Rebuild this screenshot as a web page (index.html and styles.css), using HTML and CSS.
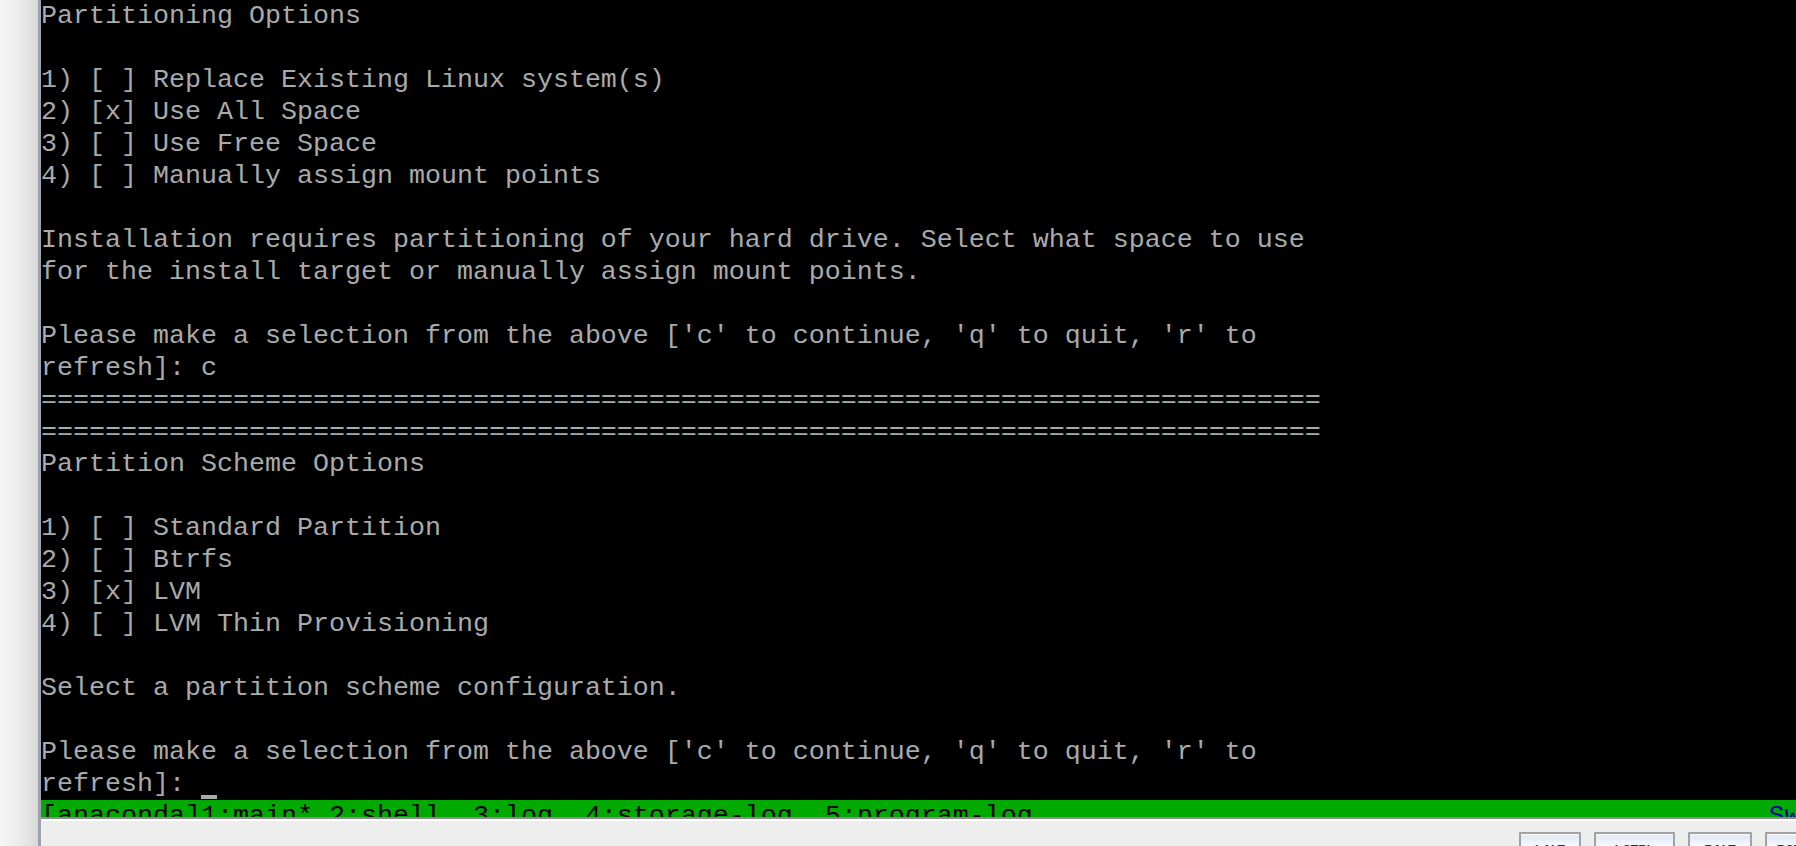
FILE: index.html
```html
<!DOCTYPE html>
<html lang="en">
<head>
<meta charset="utf-8">
<title>Console</title>
<link rel="stylesheet" href="styles.css">
</head>
<body>
<div class="app">
  <aside class="side"></aside>
  <main class="main">
    <div class="term">
<pre class="screen">Partitioning Options

1) [ ] Replace Existing Linux system(s)
2) [x] Use All Space
3) [ ] Use Free Space
4) [ ] Manually assign mount points

Installation requires partitioning of your hard drive. Select what space to use
for the install target or manually assign mount points.

Please make a selection from the above ['c' to continue, 'q' to quit, 'r' to
refresh]: c
================================================================================
================================================================================
Partition Scheme Options

1) [ ] Standard Partition
2) [ ] Btrfs
3) [x] LVM
4) [ ] LVM Thin Provisioning

Select a partition scheme configuration.

Please make a selection from the above ['c' to continue, 'q' to quit, 'r' to
refresh]: <span class="cursor"> </span>
<span class="status">[anaconda]1:main* 2:shell  3:log  4:storage-log  5:program-log                                              <span class="status-right">Switch tab: Alt+Tab | Help: F1 </span></span></pre>
    </div>
    <div class="sep"></div>
    <div class="toolbar">
      <button class="key k1">LALT</button>
      <button class="key k2">LCTRL</button>
      <button class="key k3">RALT</button>
      <button class="key k4">RCTRL</button>
    </div>
  </main>
</div>
</body>
</html>
```

FILE: styles.css
```css
html, body {
  margin: 0;
  padding: 0;
  width: 1796px;
  height: 846px;
  overflow: hidden;
  background: #eeeeee;
}

.app {
  display: flex;
  width: 1796px;
  height: 846px;
}

.side {
  width: 38px;
  flex: none;
  background: linear-gradient(to right, #f5f5f5 0%, #ececec 50%, #d9d9d9 100%);
  border-right: 3px solid #9ca3ad;
}

.main {
  flex: 1;
  display: flex;
  flex-direction: column;
  min-width: 0;
}

.term {
  height: 817px;
  flex: none;
  background: #000000;
  overflow: hidden;
}

.screen {
  margin: 0;
  font-family: "Liberation Mono", "DejaVu Sans Mono", monospace;
  font-size: 26.66px;
  line-height: 32px;
  color: #aaaaaa;
  white-space: pre;
}

.cursor {
  box-shadow: inset 0 -4px 0 #aaaaaa;
}

.status {
  display: inline-block;
  width: 2400px;
  background: #00aa00;
  color: #000000;
}

.status-right {
  color: #0000aa;
}

.sep {
  flex: none;
  height: 2px;
  background: #8c8c8c;
  border-bottom: 2px solid #ffffff;
}

.toolbar {
  flex: 1;
  display: flex;
  align-items: flex-start;
  gap: 13px;
  padding: 11px 0 0 1478px;
  overflow: hidden;
  background: #eeeeee;
}

.key {
  flex: none;
  height: 28px;
  margin: 0;
  padding: 7px 0 0 0;
  border: 2px solid #a2a2a2;
  border-radius: 1px;
  background: linear-gradient(to bottom, #ffffff 0px, #dfe8f4 2px, #eef3f9 8px, #ffffff 16px);
  font-family: "Liberation Sans", Arial, sans-serif;
  font-size: 12px;
  font-weight: bold;
  line-height: 14px;
  color: #333333;
  text-align: center;
  box-sizing: border-box;
}

.k1 { width: 62px; }
.k2 { width: 81px; }
.k3 { width: 64px; }
.k4 { width: 64px; }
```
